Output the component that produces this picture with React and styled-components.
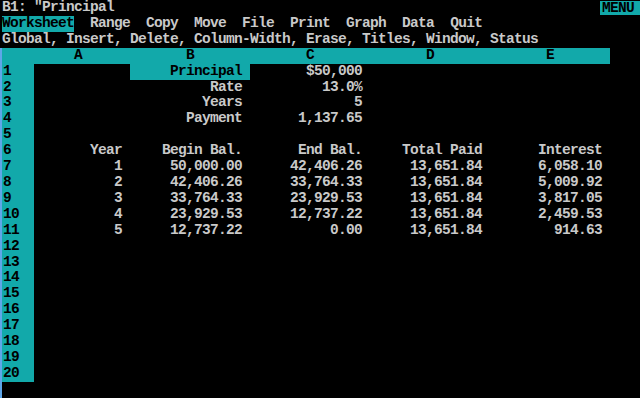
import React from "react";
import styled, { createGlobalStyle } from "styled-components";

const TEAL = "#12a9aa";
const TEXT = "#c9c9c9";
const LINE = "15.92px";

const Global = createGlobalStyle`
  html, body { margin: 0; padding: 0; background: #000; }
  body { width: 640px; height: 398px; overflow: hidden; }
`;

const Screen = styled.div`
  width: 640px;
  height: 398px;
  background: #000;
  color: ${TEXT};
  font-family: "Liberation Mono", "DejaVu Sans Mono", monospace;
  font-weight: bold;
  font-size: 14.5px;
  letter-spacing: -0.7px;
  display: flex;
  flex-direction: column;
  overflow: hidden;
`;

const Line = styled.div`
  height: ${LINE};
  line-height: ${LINE};
  padding-left: 2px;
  white-space: pre;
  display: flex;
  align-items: stretch;
`;

const Fill = styled.span`
  flex: 1;
`;

const Badge = styled.span`
  background: ${TEAL};
  color: #000;
  width: 38px;
  padding-left: 2px;
  margin-top: 1px;
  margin-bottom: 1px;
  line-height: 14px;
`;

const MenuItem = styled.span`
  background: ${({ $active }) => ($active ? TEAL : "transparent")};
  color: ${({ $active }) => ($active ? "#000" : TEXT)};
  margin-right: 16px;
`;

const Sheet = styled.div`
  flex: 1;
  border-left: 2px solid #5ea6e8;
  display: grid;
  grid-template-columns: 32px 96px repeat(4, 120px) 1fr;
  grid-auto-rows: ${LINE};
  align-content: start;
`;

const Corner = styled.div`
  background: ${TEAL};
`;

const ColHead = styled.div`
  background: ${TEAL};
  color: #000;
  line-height: ${LINE};
  padding-left: ${({ $lead }) => $lead * 8}px;
  white-space: pre;
`;

const RowHead = styled.div`
  background: ${TEAL};
  color: #000;
  line-height: ${LINE};
  padding-left: 1px;
`;

const Cell = styled.div`
  line-height: ${LINE};
  text-align: right;
  padding-right: 8px;
  white-space: pre;
  background: ${({ $sel }) => ($sel ? TEAL : "transparent")};
  color: ${({ $sel }) => ($sel ? "#000" : TEXT)};
`;

const Blank = styled.div``;

const widths = [12, 15, 15, 15, 15];
const letters = ["A", "B", "C", "D", "E"];

const data = {
  1: ["", "Principal", "$50,000", "", ""],
  2: ["", "Rate", "13.0%", "", ""],
  3: ["", "Years", "5", "", ""],
  4: ["", "Payment", "1,137.65", "", ""],
  6: ["Year", "Begin Bal.", "End Bal.", "Total Paid", "Interest"],
  7: ["1", "50,000.00", "42,406.26", "13,651.84", "6,058.10"],
  8: ["2", "42,406.26", "33,764.33", "13,651.84", "5,009.92"],
  9: ["3", "33,764.33", "23,929.53", "13,651.84", "3,817.05"],
  10: ["4", "23,929.53", "12,737.22", "13,651.84", "2,459.53"],
  11: ["5", "12,737.22", "0.00", "13,651.84", "914.63"],
};

const menu = ["Worksheet", "Range", "Copy", "Move", "File", "Print", "Graph", "Data", "Quit"];

export default function App() {
  const rows = [];
  for (let r = 1; r <= 20; r++) {
    const vals = data[r] || ["", "", "", "", ""];
    rows.push(<RowHead key={`h${r}`}>{r}</RowHead>);
    vals.forEach((v, c) => {
      rows.push(
        <Cell key={`c${r}-${c}`} $sel={r === 1 && c === 1}>
          {v}
        </Cell>
      );
    });
    rows.push(<Blank key={`b${r}`} />);
  }

  return (
    <>
      <Global />
      <Screen>
        <Line>
          <Fill>B1: "Principal</Fill>
          <Badge>MENU</Badge>
        </Line>
        <Line>
          {menu.map((m, i) => (
            <MenuItem key={m} $active={i === 0}>
              {m}
            </MenuItem>
          ))}
        </Line>
        <Line>Global, Insert, Delete, Column-Width, Erase, Titles, Window, Status</Line>
        <Sheet>
          <Corner />
          {letters.map((l, i) => (
            <ColHead key={l} $lead={Math.floor((widths[i] - 1) / 2)}>
              {l}
            </ColHead>
          ))}
          <Blank />
          {rows}
        </Sheet>
      </Screen>
    </>
  );
}
